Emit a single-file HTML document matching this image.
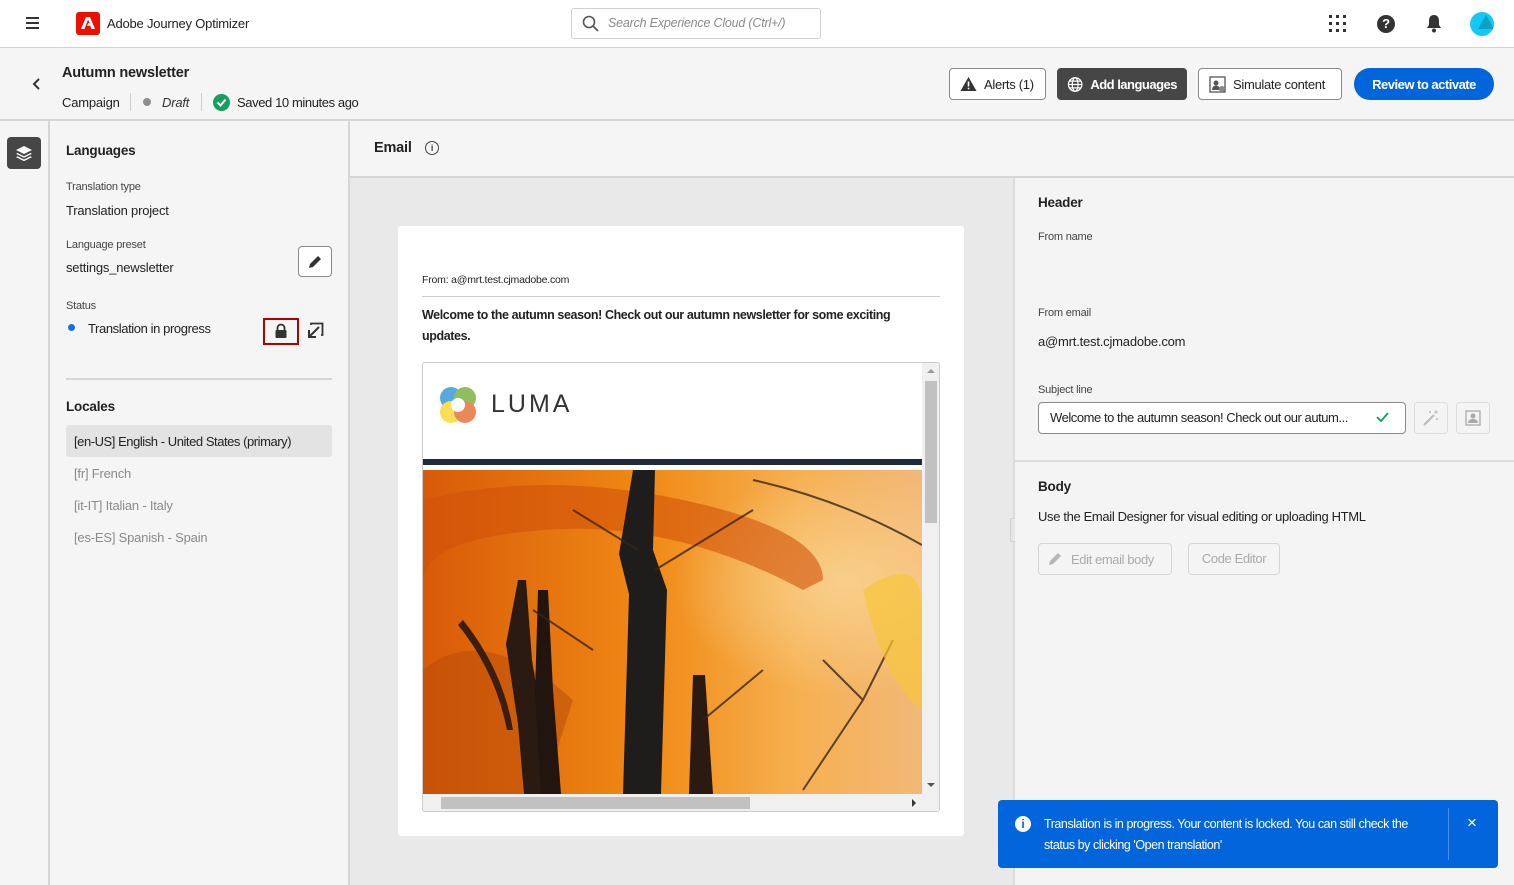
<!DOCTYPE html>
<html><head><meta charset="utf-8"><style>
*{box-sizing:border-box;margin:0;padding:0}
body{width:1514px;height:885px;overflow:hidden;font-family:"Liberation Sans",sans-serif;color:#222;background:#f5f5f5;position:relative;font-size:13px;letter-spacing:-0.2px}
.abs{position:absolute;white-space:nowrap}
.btn{position:absolute;height:32px;border-radius:4px;font-size:13px;display:flex;align-items:center;gap:7px;padding:0 10px;white-space:nowrap;letter-spacing:-0.3px}
.lbl{font-size:11px;color:#444}
.gray{color:#8a8a8a}
</style></head><body>
<!-- top bar -->
<div class="abs" style="left:0;top:0;width:1514px;height:48px;background:#fff;border-bottom:1px solid #d3d3d3"></div>
<div class="abs" style="left:26px;top:17px;width:13px;height:2px;background:#333;box-shadow:0 5px 0 #333,0 10px 0 #333"></div>
<div class="abs" style="left:76px;top:12px;width:24px;height:23px;background:#eb1000;border-radius:3px"></div>
<svg class="abs" style="left:80px;top:15px" width="16" height="16" viewBox="0 0 16 16"><path d="M6 2h4l5 12h-3.5l-1.3-3.2H7l1.2-2.6h1.5L8 4.5 4.5 14H1z" fill="#fff"/></svg>
<div class="abs" style="left:107px;top:16px;font-size:13px;color:#222">Adobe Journey Optimizer</div>
<div class="abs" style="left:571px;top:8px;width:250px;height:31px;border:1px solid #d0d0d0;border-radius:3px"></div>
<svg class="abs" style="left:582px;top:15px" width="17" height="17" viewBox="0 0 17 17"><circle cx="7" cy="7" r="5.5" fill="none" stroke="#555" stroke-width="1.6"/><path d="M11 11l5 5" stroke="#555" stroke-width="1.8"/></svg>
<div class="abs" style="left:608px;top:16px;font-size:12.5px;color:#8a8a8a;font-style:italic">Search Experience Cloud (Ctrl+/)</div>
<svg class="abs" style="left:1329px;top:15px" width="17" height="17"><g fill="#333"><rect x="0" y="0" width="3" height="3"/><rect x="7" y="0" width="3" height="3"/><rect x="14" y="0" width="3" height="3"/><rect x="0" y="7" width="3" height="3"/><rect x="7" y="7" width="3" height="3"/><rect x="14" y="7" width="3" height="3"/><rect x="0" y="14" width="3" height="3"/><rect x="7" y="14" width="3" height="3"/><rect x="14" y="14" width="3" height="3"/></g></svg>
<div class="abs" style="left:1377px;top:15px;width:18px;height:18px;border-radius:50%;background:#333;color:#fff;font-size:13px;font-weight:bold;text-align:center;line-height:18px">?</div>
<svg class="abs" style="left:1425px;top:14px" width="18" height="19" viewBox="0 0 18 19"><path d="M9 1c-3.5 0-5 2.5-5 6v4l-2 3h14l-2-3V7c0-3.5-1.5-6-5-6z" fill="#333"/><circle cx="9" cy="16.5" r="2" fill="#333"/></svg>
<div class="abs" style="left:1470px;top:12px;width:24px;height:24px;border-radius:50%;background:#14c8f5;overflow:hidden"><div style="position:absolute;left:8px;top:3px;width:0;height:0;border-left:8px solid transparent;border-right:8px solid transparent;border-bottom:14px solid #0aa0c8"></div></div>

<!-- subheader -->
<div class="abs" style="left:0;top:119px;width:1514px;height:2px;background:#d6d6d6"></div>
<svg class="abs" style="left:32px;top:78px" width="10" height="12"><path d="M7 1L2 6l5 5" fill="none" stroke="#333" stroke-width="2"/></svg>
<div class="abs" style="left:62px;top:65px;font-size:14.5px;font-weight:bold;color:#222">Autumn newsletter</div>
<div class="abs" style="left:62px;top:95px;font-size:13px;color:#222">Campaign</div>
<div class="abs" style="left:130px;top:93px;width:1px;height:18px;background:#ccc"></div>
<div class="abs" style="left:143px;top:98px;width:8px;height:8px;border-radius:50%;background:#8e8e8e"></div>
<div class="abs" style="left:162px;top:95px;font-size:13px;font-style:italic;color:#333">Draft</div>
<div class="abs" style="left:201px;top:93px;width:1px;height:18px;background:#ccc"></div>
<div class="abs" style="left:213px;top:94px;width:17px;height:17px;border-radius:50%;background:#12a05c"></div>
<svg class="abs" style="left:213px;top:94px" width="17" height="17"><path d="M4.5 8.5l3 3 5-6" fill="none" stroke="#fff" stroke-width="2"/></svg>
<div class="abs" style="left:237px;top:95px;font-size:13px;color:#222;letter-spacing:-0.4px">Saved 10 minutes ago</div>

<div class="btn" style="left:949px;top:68px;width:97px;border:1px solid #8a8a8a;background:#fff"><svg width="17" height="16"><path d="M8.5 1L16.5 15H.5z" fill="#333"/><rect x="7.7" y="5.5" width="1.6" height="5" fill="#fff"/><rect x="7.7" y="11.7" width="1.6" height="1.6" fill="#fff"/></svg>Alerts (1)</div>
<div class="btn" style="left:1057px;top:68px;width:130px;background:#464646;color:#fff;font-weight:bold;letter-spacing:-0.5px"><svg width="17" height="17" viewBox="0 0 17 17"><g fill="none" stroke="#fff" stroke-width="1.3"><circle cx="8.5" cy="8.5" r="7"/><ellipse cx="8.5" cy="8.5" rx="3" ry="7"/><path d="M1.5 8.5h14M2.5 5h12M2.5 12h12"/></g></svg>Add languages</div>
<div class="btn" style="left:1198px;top:68px;width:144px;border:1px solid #8a8a8a;background:#fff"><svg width="17" height="17"><rect x="1" y="1" width="15" height="15" fill="none" stroke="#555" stroke-width="1.3"/><circle cx="7" cy="7" r="2.5" fill="#555"/><path d="M3 14c0-3 2-4.5 4-4.5s4 1.5 4 4.5z" fill="#555"/><circle cx="13" cy="13" r="3" fill="#888"/></svg>Simulate content</div>
<div class="btn" style="left:1354px;top:68px;width:140px;background:#0265dc;color:#fff;font-weight:bold;border-radius:16px;justify-content:center;letter-spacing:-0.5px">Review to activate</div>

<!-- left rail -->
<div class="abs" style="left:48px;top:121px;width:2px;height:764px;background:#d6d6d6"></div>
<div class="abs" style="left:7px;top:137px;width:34px;height:32px;background:#464646;border-radius:4px"></div>
<svg class="abs" style="left:15px;top:145px" width="18" height="17" viewBox="0 0 18 17"><g fill="#fff"><path d="M9 1l8 4-8 4-8-4z"/><path d="M2.5 8l6.5 3.2L15.5 8l1.5.8-8 4-8-4z"/><path d="M2.5 11.3l6.5 3.2 6.5-3.2 1.5.8-8 4-8-4z"/></g></svg>

<!-- left panel -->
<div class="abs" style="left:348px;top:121px;width:2px;height:764px;background:#d6d6d6"></div>
<div class="abs" style="left:66px;top:143px;font-size:13.5px;font-weight:bold">Languages</div>
<div class="abs lbl" style="left:66px;top:181px">Translation type</div>
<div class="abs" style="left:66px;top:203px">Translation project</div>
<div class="abs lbl" style="left:66px;top:239px">Language preset</div>
<div class="abs" style="left:66px;top:260px">settings_newsletter</div>
<div class="abs" style="left:298px;top:246px;width:34px;height:31px;border:1px solid #8a8a8a;border-radius:4px;background:#fff"></div>
<svg class="abs" style="left:307px;top:254px" width="16" height="16"><path d="M2 14l1-4 8-8 3 3-8 8z" fill="#333"/></svg>
<div class="abs lbl" style="left:66px;top:300px">Status</div>
<div class="abs" style="left:68px;top:324px;width:7px;height:7px;border-radius:50%;background:#1473e6"></div>
<div class="abs" style="left:88px;top:321px;font-size:13px;letter-spacing:-0.4px">Translation in progress</div>
<div class="abs" style="left:263px;top:318px;width:36px;height:27px;border:2px solid #b40000"></div>
<svg class="abs" style="left:274px;top:323px" width="14" height="16"><path d="M3.5 7V5a3.5 3.5 0 0 1 7 0v2" fill="none" stroke="#333" stroke-width="1.8"/><rect x="1.5" y="7" width="11" height="8" rx="1" fill="#333"/></svg>
<svg class="abs" style="left:307px;top:322px" width="17" height="17" viewBox="0 0 17 17"><path d="M4 3V1.5h11.5V13H14" fill="none" stroke="#333" stroke-width="1.8"/><path d="M12 5L3 14" stroke="#333" stroke-width="2"/><path d="M2 8v7h7" fill="none" stroke="#333" stroke-width="2"/></svg>
<div class="abs" style="left:66px;top:378px;width:266px;height:2px;background:#d6d6d6"></div>
<div class="abs" style="left:66px;top:399px;font-weight:bold;font-size:13.5px">Locales</div>
<div class="abs" style="left:66px;top:425px;width:266px;height:32px;background:#e3e3e3;border-radius:3px"></div>
<div class="abs" style="left:74px;top:434px;letter-spacing:-0.45px">[en-US] English - United States (primary)</div>
<div class="abs gray" style="left:74px;top:466px">[fr] French</div>
<div class="abs gray" style="left:74px;top:498px">[it-IT] Italian - Italy</div>
<div class="abs gray" style="left:74px;top:530px">[es-ES] Spanish - Spain</div>

<!-- email header -->
<div class="abs" style="left:350px;top:176px;width:1164px;height:2px;background:#d6d6d6"></div>
<div class="abs" style="left:374px;top:140px;font-size:14.5px;font-weight:bold">Email</div>
<div class="abs" style="left:425px;top:141px;width:14px;height:14px;border:1.3px solid #444;border-radius:50%;font-size:9px;text-align:center;line-height:12px;font-weight:bold;color:#444">i</div>

<!-- preview area -->
<div class="abs" style="left:350px;top:178px;width:663px;height:707px;background:#e9e9e9"></div>
<div class="abs" style="left:1013px;top:178px;width:2px;height:707px;background:#dcdcdc"></div>
<div class="abs" style="left:1010px;top:518px;width:8px;height:24px;background:#e6e6e6;border:1px solid #d0d0d0;border-radius:2px"></div>
<div class="abs" style="left:398px;top:226px;width:566px;height:610px;background:#fff;border-radius:3px"></div>
<div class="abs" style="left:422px;top:274px;font-size:10.5px">From: a@mrt.test.cjmadobe.com</div>
<div class="abs" style="left:422px;top:296px;width:518px;height:1px;background:#ccc"></div>
<div class="abs" style="left:422px;top:305px;width:510px;font-size:12.5px;font-weight:bold;line-height:21px;white-space:normal;letter-spacing:-0.4px">Welcome to the autumn season! Check out our autumn newsletter for some exciting updates.</div>
<div class="abs" style="left:422px;top:362px;width:518px;height:450px;border:1px solid #ccc;border-radius:3px;overflow:hidden;background:#fff">
  <svg class="abs" style="left:15px;top:22px" width="42" height="40" viewBox="0 0 42 40"><g opacity=".85"><circle cx="13" cy="13" r="11" fill="#3a9ad9"/><circle cx="27" cy="13" r="11" fill="#7cb342"/><circle cx="13" cy="27" r="11" fill="#fdd835"/><circle cx="27" cy="27" r="11" fill="#e8743b"/></g><circle cx="20" cy="20" r="7" fill="#fff"/></svg>
  <div class="abs" style="left:68px;top:27px;font-size:25px;letter-spacing:3px;color:#333">LUMA</div>
  <div class="abs" style="left:0;top:96px;width:499px;height:6px;background:#1e2a38"></div>
  <svg class="abs" style="left:0;top:107px" width="499" height="324" viewBox="0 0 499 324">
    <defs><linearGradient id="g" x1="0" x2="1" y1="0" y2="0"><stop offset="0" stop-color="#d85a08"/><stop offset=".45" stop-color="#f08a14"/><stop offset=".75" stop-color="#f6b050"/><stop offset="1" stop-color="#f2b878"/></linearGradient>
    <radialGradient id="r" cx=".85" cy=".35" r=".35"><stop offset="0" stop-color="#f9cf8a"/><stop offset="1" stop-color="#f9cf8a" stop-opacity="0"/></radialGradient></defs>
    <rect width="499" height="324" fill="url(#g)"/>
    <rect width="499" height="324" fill="url(#r)"/>
    <path d="M0 30 Q120 0 260 30 T400 110 L380 120 Q250 50 120 60 T0 120z" fill="#d2520a" opacity=".6"/>
    <path d="M0 200 Q60 150 150 230 L120 324 H0z" fill="#b84a08" opacity=".5"/>
    <path d="M210 0h22l-2 80 14 40-6 204h-38l6-200-10-40z" fill="#1f1d1b"/>
    <path d="M95 110l8 0 6 80 10 60 10 74h-28l-6-70-12-80z" fill="#2a1a12"/>
    <path d="M115 120h10l5 100 8 104h-20l-6-100z" fill="#22140e"/>
    <path d="M270 205h12l8 119h-24z" fill="#2a1a12"/>
    <path d="M40 150 Q80 200 90 260 L84 260 Q72 200 35 155z" fill="#3a1e10"/>
    <g stroke="#3a2418" stroke-width="2" fill="none" opacity=".8"><path d="M215 80 L150 40 M232 100 L330 40 M330 10 Q420 30 499 75 M170 180 L110 140 M280 250 L340 200 M380 320 L440 230 L470 170 M440 230 L400 190"/></g>
    <path d="M440 120 Q499 80 499 140 L499 240 Q460 210 440 120z" fill="#f6c63a" opacity=".7"/>
  </svg>
  <div class="abs" style="left:499px;top:0;width:18px;height:431px;background:#f0f0f0"></div>
  <div class="abs" style="left:504px;top:6px;width:0;height:0;border-left:4px solid transparent;border-right:4px solid transparent;border-bottom:4px solid #999"></div>
  <div class="abs" style="left:502px;top:18px;width:12px;height:142px;background:#c1c1c1"></div>
  <div class="abs" style="left:504px;top:420px;width:0;height:0;border-left:4px solid transparent;border-right:4px solid transparent;border-top:4px solid #555"></div>
  <div class="abs" style="left:0;top:431px;width:517px;height:18px;background:#f0f0f0"></div>
  <div class="abs" style="left:18px;top:434px;width:309px;height:12px;background:#c1c1c1"></div>
  <div class="abs" style="left:489px;top:436px;width:0;height:0;border-top:4px solid transparent;border-bottom:4px solid transparent;border-left:4px solid #333"></div>
</div>

<!-- right panel -->
<div class="abs" style="left:1015px;top:178px;width:499px;height:707px;background:#f4f4f4"></div>
<div class="abs" style="left:1038px;top:195px;font-weight:bold;font-size:13.5px">Header</div>
<div class="abs lbl" style="left:1038px;top:231px">From name</div>
<div class="abs lbl" style="left:1038px;top:307px">From email</div>
<div class="abs" style="left:1038px;top:334px;font-size:13px">a@mrt.test.cjmadobe.com</div>
<div class="abs lbl" style="left:1038px;top:384px">Subject line</div>
<div class="abs" style="left:1038px;top:402px;width:368px;height:32px;border:1px solid #8a8a8a;border-radius:4px;background:#fff"></div>
<div class="abs" style="left:1050px;top:410px;font-size:13px;letter-spacing:-0.45px">Welcome to the autumn season! Check out our autum...</div>
<svg class="abs" style="left:1376px;top:411px" width="13" height="12"><path d="M1 6l4 4 7-8" fill="none" stroke="#12a05c" stroke-width="1.8"/></svg>
<div class="abs" style="left:1414px;top:402px;width:34px;height:32px;border:1px solid #ddd;border-radius:4px"></div>
<svg class="abs" style="left:1422px;top:409px" width="18" height="18"><path d="M2 16L12 6" stroke="#bbb" stroke-width="2"/><path d="M14 1v4M12 3h4M8 2v2M7 3h2M15 9v2M14 10h2" stroke="#bbb" stroke-width="1"/></svg>
<div class="abs" style="left:1456px;top:402px;width:34px;height:32px;border:1px solid #ddd;border-radius:4px"></div>
<svg class="abs" style="left:1465px;top:410px" width="16" height="16"><rect x="1" y="1" width="14" height="14" fill="none" stroke="#aaa" stroke-width="1.3"/><circle cx="8" cy="6" r="2.5" fill="#aaa"/><path d="M3 13c0-3 2.5-4 5-4s5 1 5 4z" fill="#aaa"/></svg>
<div class="abs" style="left:1015px;top:460px;width:499px;height:2px;background:#dcdcdc"></div>
<div class="abs" style="left:1038px;top:479px;font-weight:bold;font-size:13.5px">Body</div>
<div class="abs" style="left:1038px;top:509px;font-size:13px;letter-spacing:-0.35px">Use the Email Designer for visual editing or uploading HTML</div>
<div class="abs" style="left:1038px;top:543px;width:134px;height:32px;border:1px solid #d5d5d5;border-radius:4px"></div>
<svg class="abs" style="left:1047px;top:551px" width="16" height="16"><path d="M2 14l1-4 8-8 3 3-8 8z" fill="#b5b5b5"/></svg>
<div class="abs" style="left:1071px;top:552px;color:#aaa;font-size:13px;letter-spacing:-0.4px">Edit email body</div>
<div class="abs" style="left:1188px;top:543px;width:92px;height:32px;border:1px solid #d5d5d5;border-radius:4px;color:#aaa;font-size:13px;text-align:center;line-height:30px;letter-spacing:-0.4px">Code Editor</div>

<!-- toast -->
<div class="abs" style="left:998px;top:800px;width:500px;height:68px;background:#0265dc;border-radius:4px;color:#fff"></div>
<div class="abs" style="left:1015px;top:816px;width:16px;height:16px;border-radius:50%;background:#fff;color:#0265dc;font-size:12px;font-weight:bold;text-align:center;line-height:16px">i</div>
<div class="abs" style="left:1044px;top:814px;width:385px;font-size:12.5px;line-height:21px;color:#fff;white-space:normal;letter-spacing:-0.45px">Translation is in progress. Your content is locked. You can still check the status by clicking 'Open translation'</div>
<div class="abs" style="left:1448px;top:808px;width:1px;height:52px;background:#4a8ee8"></div>
<div class="abs" style="left:1467px;top:813px;color:#fff;font-size:17px">×</div>
</body></html>
